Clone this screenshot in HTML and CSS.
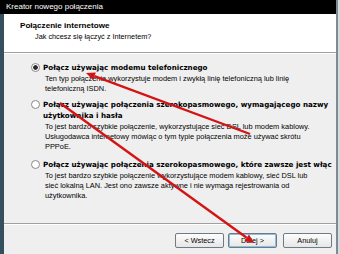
FILE: index.html
```html
<!DOCTYPE html>
<html>
<head>
<meta charset="utf-8">
<title>Kreator nowego połączenia</title>
<link rel="stylesheet" href="styles.css">
</head>
<body>
<div class="screen">
	<div class="window">
		<div class="titlebar">Kreator nowego połączenia</div>
		<div class="frame">
			<div class="edge-left"></div>
			<div class="dialog">
				<div class="header">
					<h1>Połączenie internetowe</h1>
					<p>Jak chcesz się łączyć z Internetem?</p>
				</div>
				<div class="options">
					<div class="option">
						<div class="label"><span class="radio checked"></span><span>Połącz używając modemu telefonicznego</span></div>
						<p class="desc">Ten typ połączenia wykorzystuje modem i zwykłą linię telefoniczną lub linię<br>telefoniczną ISDN.</p>
					</div>
					<div class="option opt2">
						<div class="label"><span class="radio"></span><span>Połącz używając połączenia szerokopasmowego, wymagającego nazwy<br>użytkownika i hasła</span></div>
						<p class="desc">To jest bardzo szybkie połączenie, wykorzystujące sieć DSL lub modem kablowy.<br>Usługodawca internetowy mówiąc o tym typie połączenia może używać skrótu<br>PPPoE.</p>
					</div>
					<div class="option opt3">
						<div class="label"><span class="radio"></span><span>Połącz używając połączenia szerokopasmowego, które zawsze jest włąc</span></div>
						<p class="desc">To jest bardzo szybkie połączenie wykorzystujące modem kablowy, sieć DSL lub<br>sieć lokalną LAN. Jest ono zawsze aktywne i nie wymaga rejestrowania od<br>użytkownika.</p>
					</div>
				</div>
				<div class="footer">
					<button class="btn">&lt; Wstecz</button>
					<button class="btn default">Dalej &gt;</button>
					<button class="btn cancel">Anuluj</button>
				</div>
			</div>
		</div>
	</div>
	<div class="edge-right"></div>
	<!-- czerwone strzałki -->
	<svg class="arrows" width="340" height="254" viewBox="0 0 340 254">
		<line x1="250" y1="134" x2="94.4" y2="76.1" />
		<polygon points="86,73 95.8,72.4 93,79.9" />
		<line x1="60" y1="103" x2="246.7" y2="237.7" />
		<polygon points="254,243 244.4,241 249,234.5" />
	</svg>
</div>
</body>
</html>
```

FILE: styles.css
```css
*{margin:0;padding:0;box-sizing:border-box;}
body{width:340px;height:254px;overflow:hidden;background:#d4dade;font:7.4px/10px "Liberation Sans",Arial,sans-serif;color:#000;}
.screen{position:relative;display:flex;width:340px;height:254px;}
.window{width:336px;display:flex;flex-direction:column;}
.edge-right{width:4px;border-left:2px solid #7f8c94;background:#d4dade;}
.titlebar{height:14px;background:#000;color:#fff;font-size:8px;line-height:14px;padding-left:6px;}
.frame{flex:1;display:flex;min-height:0;}
.edge-left{width:4px;background:#34505e;}
.dialog{flex:1;display:flex;flex-direction:column;background:#efefef;overflow:hidden;min-width:0;}
.header{height:39px;background:#fff;border-bottom:1px solid #a0a0a0;padding:7px 0 0 16px;}
.header h1{font-size:8.1px;font-weight:bold;line-height:10px;}
.header p{margin:1px 0 0 15px;font-size:7.3px;line-height:10px;}
.options{flex:1;padding:8px 0 0 27px;white-space:nowrap;border-top:1px solid #fff;}
.opt2{margin-top:5px;}
.opt3{margin-top:7px;}
.label{display:flex;align-items:flex-start;font-family:"DejaVu Sans",Verdana,sans-serif;font-weight:bold;font-size:7.15px;line-height:11px;}
.radio{flex:none;width:9px;height:9px;margin:1px 3px 0 0;border:1px solid #8a8a8a;border-radius:50%;background:#fff;}
.radio.checked{background:radial-gradient(circle,#2a2a2a 0 2px,#fff 2.6px);}
.desc{margin:1px 0 0 14px;line-height:10px;}
.footer{height:31px;border-top:1px solid #a0a0a0;box-shadow:inset 0 1px #fff;display:flex;justify-content:flex-end;align-items:flex-start;gap:4px;padding:9px 4px 0 0;}
.btn{width:49px;height:15px;font:7.3px "Liberation Sans",Arial,sans-serif;color:#000;border:1px solid #6f7b84;border-radius:2px;background:linear-gradient(#fdfdfd,#e6e6e6);}
.default{box-shadow:inset 0 0 0 1px #8fbde2;}
.cancel{margin-left:2px;}
.arrows{position:absolute;left:0;top:0;pointer-events:none;}
.arrows line{stroke:#d41414;stroke-width:2.4;}
.arrows polygon{fill:#d41414;}
```
